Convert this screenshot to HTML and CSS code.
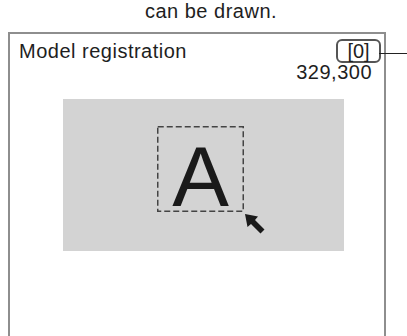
FILE: index.html
```html
<!DOCTYPE html>
<html>
<head>
<meta charset="utf-8">
<link rel="stylesheet" href="styles.css">
</head>
<body>
<div class="caption">can be drawn.</div>
<div class="frame">
  <div class="head">
    <div class="title">Model registration</div>
    <div class="side">
      <div class="badge">[0]<span class="leader"></span></div>
      <div class="coord">329,300</div>
    </div>
  </div>
  <div class="stage">
    <div class="sel">
      <svg class="dash" width="87" height="86" viewBox="0 0 87 86"><rect x="0.75" y="0.75" width="85.5" height="84.5" fill="none" stroke="#444" stroke-width="1.5" stroke-dasharray="6 3"/></svg>
      <span class="glyph">A</span>
    </div>
    <svg class="arrow" width="24" height="24" viewBox="0 0 24 24"><path d="M2 2 L15 4.5 L12 8 L21.5 17.5 L17.5 21.5 L8 12 L4.5 15 Z" fill="#1a1a1a"/></svg>
  </div>
</div>
</body>
</html>
```
FILE: styles.css
```css
html, body {
  margin: 0;
  padding: 0;
  background: #fff;
}
body {
  width: 407px;
  height: 336px;
  overflow: hidden;
  font-family: "Liberation Sans", Arial, sans-serif;
  color: #1e1e1e;
}
.caption {
  height: 32px;
  box-sizing: border-box;
  padding-top: 1px;
  font-size: 20px;
  line-height: 20px;
  letter-spacing: 0.5px;
  text-align: center;
  padding-left: 15px;
}
.frame {
  margin-left: 8px;
  width: 374px;
  height: 310px;
  border: 2px solid #8e8e8e;
  border-bottom: none;
}
.head {
  height: 65px;
  box-sizing: border-box;
  display: flex;
  justify-content: space-between;
  align-items: flex-start;
  padding: 5px 3px 0 9px;
}
.title {
  font-size: 20px;
  letter-spacing: 0.5px;
  line-height: 22px;
  padding-top: 1px;
}
.side {
  display: flex;
  flex-direction: column;
  align-items: flex-end;
}
.badge {
  position: relative;
  width: 45px;
  height: 24px;
  box-sizing: border-box;
  border: 2px solid #555;
  border-radius: 6px;
  font-size: 20px;
  line-height: 20px;
  text-align: center;
}
.leader {
  position: absolute;
  left: 100%;
  top: 12px;
  width: 30px;
  height: 1px;
  background: #222;
}
.coord {
  font-size: 20px;
  letter-spacing: 0.5px;
  line-height: 20px;
  margin-top: -1.5px;
  margin-right: 9px;
}
.stage {
  position: relative;
  margin-left: 53px;
  width: 281px;
  height: 152px;
  background: #d3d3d3;
  padding: 27px 0 0 94px;
  box-sizing: border-box;
}
.sel {
  position: relative;
  width: 87px;
  height: 86px;
  display: flex;
  justify-content: center;
  box-sizing: border-box;
  padding-top: 8px;
}
.dash {
  position: absolute;
  left: 0;
  top: 0;
}
.glyph {
  font-size: 85px;
  line-height: 85px;
  color: #1a1a1a;
}
.arrow {
  position: absolute;
  left: 180px;
  top: 113px;
}
```
